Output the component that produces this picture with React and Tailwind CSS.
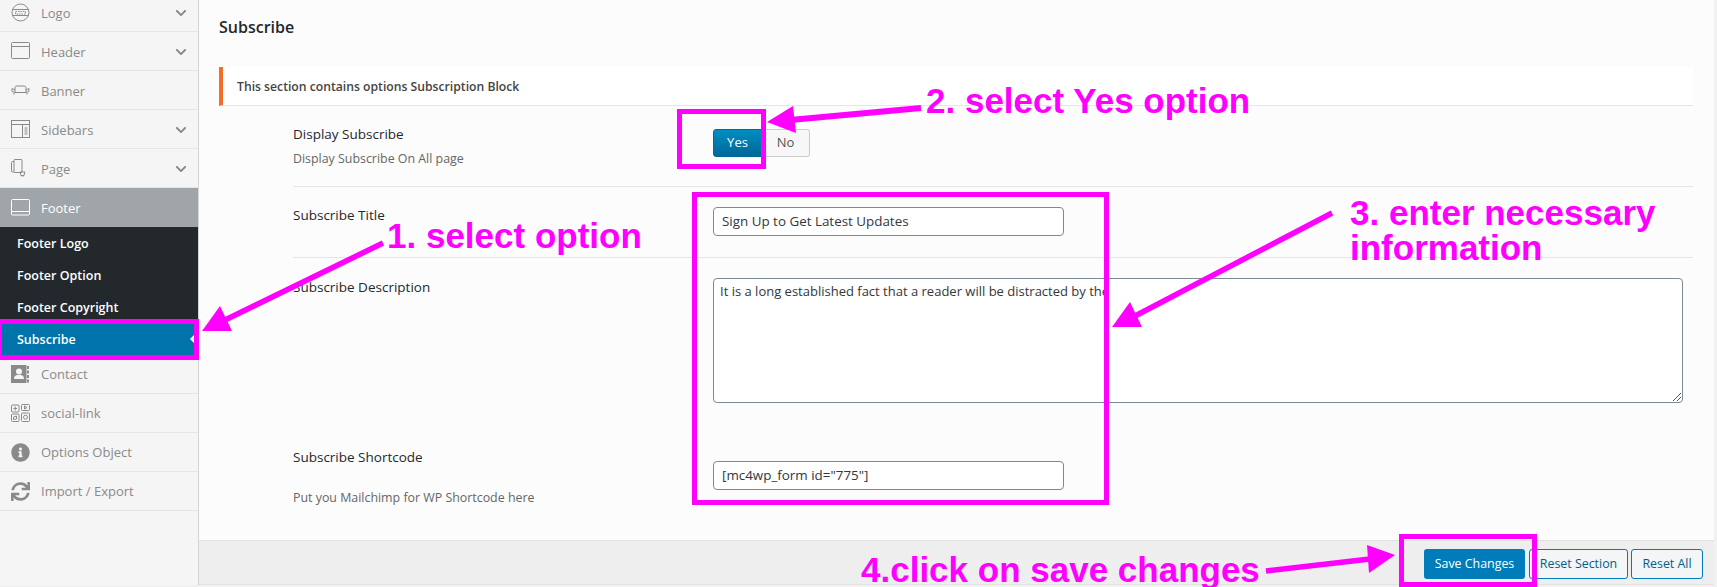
import React from "react";
import { FaInfoCircle, FaChevronDown, FaSync } from "react-icons/fa";

const S = { stroke: "#8a8a8a", strokeWidth: 1, fill: "none" };
const I = {
  logo: (
    <svg width="19" height="19" viewBox="0 0 19 19" {...S}>
      <circle cx="9.5" cy="9.5" r="8.5" />
      <path d="M1.5 6.5h16M1.5 12.5h16" />
      <path d="M4.5 8.5h10v2.5h-10z" strokeDasharray="1.5 1" />
    </svg>
  ),
  header: (
    <svg width="19" height="18" viewBox="0 0 19 18" {...S}>
      <rect x="0.5" y="0.5" width="18" height="16" rx="1" />
      <path d="M0.5 4.500h18" />
    </svg>
  ),
  banner: (
    <svg width="19" height="10" viewBox="0 0 19 10" {...S}>
      <path d="M4 5V2.500Q4 1 6 1h7q2 0 2 1.500V5M1 3.500l3 1.500v2.500h11V5l3-1.500v3l-3 1M1 3.500v3l3 1M3 8v1.500M16 8v1.500" />
    </svg>
  ),
  sidebars: (
    <svg width="19" height="18" viewBox="0 0 19 18" {...S}>
      <rect x="0.5" y="0.5" width="18" height="17" />
      <path d="M0.500 4.500h18M11.500 4.500v13M13.500 8h3M13.500 10h3M13.500 12h3M13.500 14h3" />
    </svg>
  ),
  page: (
    <svg width="15" height="18" viewBox="0 0 15 18" {...S}>
      <path d="M3 13H1.500Q0.500 13 0.500 12V3.500Q0.500 2.500 1.500 2.500H3" />
      <rect x="3" y="0.500" width="8" height="13" rx="1" />
      <path d="M9 13h5l-1 3.500H10zM10.500 17.500h.5M12.500 17.500h.5" />
    </svg>
  ),
  footer: (
    <svg width="19" height="17" viewBox="0 0 19 17" fill="none" stroke="#fff">
      <rect x="0.500" y="0.500" width="18" height="15.500" rx="1" />
      <path d="M0.500 12.500h18" />
    </svg>
  ),
  contact: (
    <svg width="18" height="18" viewBox="0 0 18 18">
      <path fill="#8a8a8a" d="M0 0h15.500v18H0zM16 1h2v3h-2zM16 5.500h2v3h-2zM16 10h2v3h-2zM16 14.500h2v3h-2z" />
      <circle cx="8" cy="6.500" r="3" fill="#f5f5f5" />
      <path fill="#f5f5f5" d="M3 14q0-3.500 3-4h4q3 .5 3 4z" />
    </svg>
  ),
  social: (
    <svg width="19" height="18" viewBox="0 0 19 18" {...S}>
      <rect x="0.500" y="1" width="7.500" height="7" rx="1" />
      <rect x="10.500" y="0.500" width="8" height="6" rx="1" />
      <rect x="0.500" y="10" width="7.500" height="7.500" rx="1" />
      <rect x="10.500" y="9" width="8" height="8.500" rx="1" />
      <circle cx="14.500" cy="13.200" r="2" />
      <path d="M13.500 2l2.500 1.500-2.500 1.500zM4.200 2.500v4M2.500 4.500h3.500M2.500 13l3-1v3l-3 .5z" />
    </svg>
  ),
};

const Nav = ({ icon, label, chevron, low }) => (
  <div className="h-[39px] flex items-center border-b border-[#e6e6e6] relative shrink-0">
    <span className="w-[41px] pl-[11px] flex items-center shrink-0">{icon}</span>
    <span className={low ? "text-[13px] pt-[1px] text-[#8a8a8a]" : "text-[13px] pt-[3px] text-[#8a8a8a]"}>{label}</span>
    {chevron && <FaChevronDown className="absolute left-[175px] mt-[1px] text-[#8a8a8a] text-[12px]" />}
  </div>
);

const Sub = ({ label }) => (
  <div className="h-[32px] flex items-center pl-[17px] pt-[2px] text-[12.5px] font-semibold text-white">{label}</div>
);

const Label = ({ children }) => <div className="text-[13.5px] font-medium text-[#23282d] leading-[18px]">{children}</div>;
const Desc = ({ children }) => <div className="text-[12.4px] text-[#666] leading-[18px]">{children}</div>;

const Input = ({ value }) => (
  <div className="w-[351px] h-[29px] bg-white border border-[#7e8993] rounded-[4px] flex items-center pl-[8px] text-[13.4px] text-[#32373c]">{value}</div>
);

const BOX = "absolute border-[5px] border-[#ff00ff]";

export default function App() {
  return (
    <div className="relative w-[1717px] h-[587px] overflow-hidden bg-[#f1f1f1] font-['Open_Sans','Noto_Sans',sans-serif]">
      <div className="flex h-[585px] w-[1714px]">
        <aside className="w-[199px] shrink-0 bg-[#f5f5f5] border-r border-[#d5d5d5] flex flex-col">
          <div className="-mt-[7px]">
            <Nav icon={I.logo} label="Logo" chevron />
            <Nav icon={I.header} label="Header" chevron />
            <Nav icon={I.banner} label="Banner" />
            <Nav icon={I.sidebars} label="Sidebars" chevron />
            <Nav icon={I.page} label="Page" chevron />
          </div>
          <div className="h-[39px] bg-[#a0a5aa] flex items-center shrink-0">
            <span className="w-[41px] pl-[11px] flex items-center shrink-0">{I.footer}</span>
            <span className="text-[13px] pt-[2px] text-white font-medium">Footer</span>
          </div>
          <div className="bg-[#23282d]">
            <Sub label="Footer Logo" />
            <Sub label="Footer Option" />
            <Sub label="Footer Copyright" />
          </div>
          <div className="h-[32px] bg-[#0073aa] flex items-center pl-[17px] pt-[2px] text-[12.5px] font-semibold text-white relative">
            Subscribe
            <span className="absolute right-[4px] top-[12px] border-y-[4px] border-y-transparent border-r-[4px] border-r-white" />
          </div>
          <Nav icon={I.contact} label="Contact" low />
          <Nav icon={I.social} label="social-link" low />
          <Nav icon={<FaInfoCircle className="text-[#8a8a8a] text-[19px]" />} label="Options Object" low />
          <Nav icon={<FaSync className="text-[#8a8a8a] text-[19px]" />} label="Import / Export" low />
        </aside>

        <main className="flex-1 bg-[#fcfcfc] flex flex-col min-w-0">
          <div className="flex-1 pl-[20px] pr-[21px]">
            <h2 className="h-[67px] pt-[16px] text-[16px] leading-[22px] font-semibold text-[#23282d]">Subscribe</h2>
            <div className="h-[39px] bg-white border-l-4 border-l-[#f56e28] border-b border-b-[#e5e5e5] flex items-center pl-[14px] pt-[2px] text-[12.2px] font-semibold text-[#444]">
              This section contains options Subscription Block
            </div>
            <div className="pl-[74px]">
              <div className="h-[81px] border-b border-[#e5e5e5] flex">
                <div className="w-[420px] pt-[19px] flex flex-col gap-[7px]">
                  <Label>Display Subscribe</Label>
                  <Desc>Display Subscribe On All page</Desc>
                </div>
                <div className="pt-[23px] flex">
                  <div className="w-[49px] h-[28px] bg-gradient-to-b from-[#008ec2] to-[#006799] border border-[#006799] rounded-l-[3px] text-white text-[13px] flex items-center justify-center">Yes</div>
                  <div className="w-[48px] h-[28px] bg-[#f7f7f7] border border-[#ccc] border-l-0 rounded-r-[3px] text-[#555] text-[13px] flex items-center justify-center">No</div>
                </div>
              </div>
              <div className="h-[71px] border-b border-[#e5e5e5] flex">
                <div className="w-[420px] pt-[19px]"><Label>Subscribe Title</Label></div>
                <div className="pt-[20px]"><Input value="Sign Up to Get Latest Updates" /></div>
              </div>
              <div className="h-[183px] flex">
                <div className="w-[420px] pt-[20px]"><Label>Subscribe Description</Label></div>
                <div className="pt-[20px] flex-1 pr-[10px]">
                  <div className="h-[125px] relative bg-white border border-[#7e8993] rounded-[4px] px-[6px] pt-[2px] text-[13px] leading-[20px] text-[#32373c]">
                    It is a long established fact that a reader will be distracted by the
                    <svg className="absolute right-[1px] bottom-[1px]" width="9" height="9" viewBox="0 0 9 9" stroke="#555" fill="none"><path d="M1 9l8-8M5 9l4-4" /></svg>
                  </div>
                </div>
              </div>
              <div className="flex">
                <div className="w-[420px] pt-[7px] flex flex-col gap-[23px]">
                  <Label>Subscribe Shortcode</Label>
                  <Desc>Put you Mailchimp for WP Shortcode here</Desc>
                </div>
                <div className="pt-[20px]"><Input value='[mc4wp_form id="775"]' /></div>
              </div>
            </div>
          </div>
          <div className="h-[45px] shrink-0 bg-[#eeeeee] border-y border-[#e2e2e2] flex items-center justify-end pr-[11px] pt-[3px] text-[12.4px]">
            <div className="w-[101px] h-[30px] bg-[#007cba] rounded-[3px] text-white flex items-center justify-center">Save Changes</div>
            <div className="w-[99px] h-[30px] ml-[4px] bg-[#f3f5f6] border border-[#007cba] rounded-[3px] text-[#016087] flex items-center justify-center">Reset Section</div>
            <div className="w-[72px] h-[30px] ml-[3px] bg-[#f3f5f6] border border-[#007cba] rounded-[3px] text-[#016087] flex items-center justify-center">Reset All</div>
          </div>
        </main>
      </div>

      {/* Annotations drawn over the screenshot */}
      <div className={`${BOX} left-[-3px] top-[319px] w-[202px] h-[41px]`} />
      <div className={`${BOX} left-[677px] top-[109px] w-[89px] h-[60px]`} />
      <div className={`${BOX} left-[692px] top-[192px] w-[417px] h-[313px]`} />
      <div className={`${BOX} left-[1399px] top-[534px] w-[138px] h-[53px]`} />
      <svg className="absolute left-0 top-0" width="1717" height="587" fill="#ff00ff" stroke="none">
        <path d="M383 243L225 320" stroke="#ff00ff" strokeWidth="5.5" />
        <path d="M202 331L220 306L232 331Z" />
        <path d="M921 108L790 120" stroke="#ff00ff" strokeWidth="6" />
        <path d="M767 122L793 106L796 133Z" />
        <path d="M1332 213L1135 316" stroke="#ff00ff" strokeWidth="5.500" />
        <path d="M1112 327L1130 302L1142 327Z" />
        <path d="M1266 571L1370 559" stroke="#ff00ff" strokeWidth="5.500" />
        <path d="M1395 555L1367 545L1369 573Z" />
      </svg>
      {[
        ["1. select option", "left-[387px] top-[217px]"],
        ["2. select Yes option", "left-[926px] top-[82px]"],
        ["3. enter necessary", "left-[1350px] top-[194px]"],
        ["information", "left-[1350px] top-[229px]"],
        ["4.click on save changes", "left-[861px] top-[551px]"],
      ].map(([t, c]) => (
        <div key={t} className={`absolute ${c} font-['Liberation_Sans',Arial,sans-serif] font-bold text-[35px] leading-[38px] text-[#ff00ff] whitespace-nowrap`}>{t}</div>
      ))}
    </div>
  );
}
